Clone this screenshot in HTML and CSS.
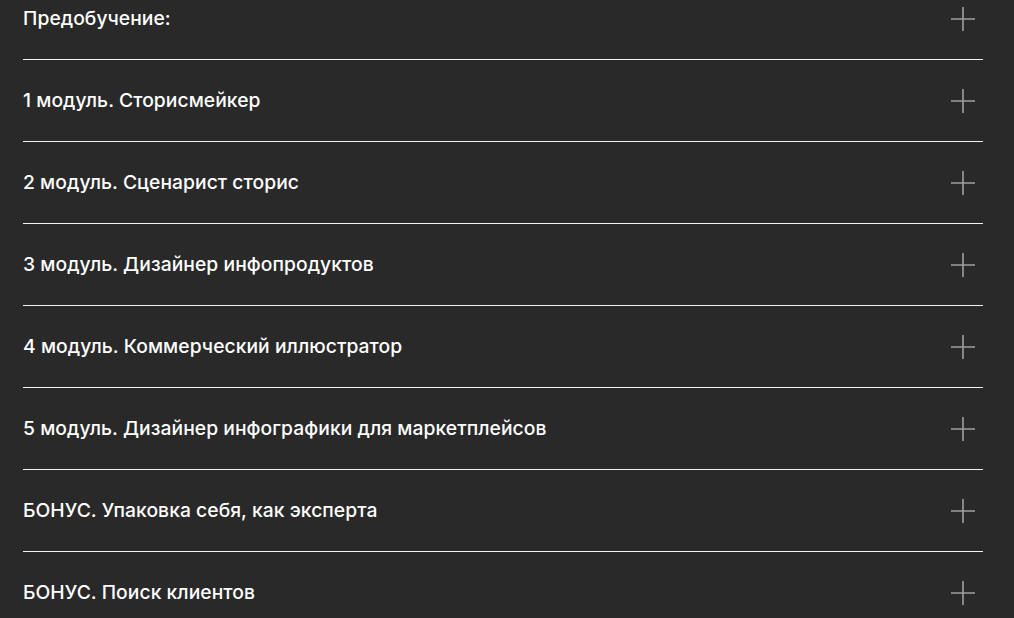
FILE: index.html
```html
<!DOCTYPE html>
<html lang="ru">
<head>
    <meta charset="UTF-8">
    <meta name="viewport" content="width=device-width, initial-scale=1.0">
    <title>Программа курса</title>
    <link rel="stylesheet" href="styles.css">
</head>
<body>
    <div class="program">
        <div class="item">
            <span class="title">Предобучение:</span>
            <svg class="plus" viewBox="0 0 24 24"><path d="M12 0V24M0 12H24"/></svg>
        </div>
        <div class="item">
            <span class="title">1 модуль. Сторисмейкер</span>
            <svg class="plus" viewBox="0 0 24 24"><path d="M12 0V24M0 12H24"/></svg>
        </div>
        <div class="item">
            <span class="title">2 модуль. Сценарист сторис</span>
            <svg class="plus" viewBox="0 0 24 24"><path d="M12 0V24M0 12H24"/></svg>
        </div>
        <div class="item">
            <span class="title">3 модуль. Дизайнер инфопродуктов</span>
            <svg class="plus" viewBox="0 0 24 24"><path d="M12 0V24M0 12H24"/></svg>
        </div>
        <div class="item">
            <span class="title">4 модуль. Коммерческий иллюстратор</span>
            <svg class="plus" viewBox="0 0 24 24"><path d="M12 0V24M0 12H24"/></svg>
        </div>
        <div class="item">
            <span class="title">5 модуль. Дизайнер инфографики для маркетплейсов</span>
            <svg class="plus" viewBox="0 0 24 24"><path d="M12 0V24M0 12H24"/></svg>
        </div>
        <div class="item">
            <span class="title">БОНУС. Упаковка себя, как эксперта</span>
            <svg class="plus" viewBox="0 0 24 24"><path d="M12 0V24M0 12H24"/></svg>
        </div>
        <div class="item">
            <span class="title">БОНУС. Поиск клиентов</span>
            <svg class="plus" viewBox="0 0 24 24"><path d="M12 0V24M0 12H24"/></svg>
        </div>
    </div>
</body>
</html>
```

FILE: styles.css
```css
html, body {
    margin: 0;
    padding: 0;
    background-color: #292929;
    color: #fff;
    font-family: Inter, 'Noto Sans', sans-serif;
    overflow: hidden;
}
.program {
    width: 960px;
    margin: -22px 0 0 23px;
}
.item {
    height: 81px;
    display: flex;
    align-items: center;
    justify-content: space-between;
    border-bottom: 1px solid #f2f2f2;
}
.title {
    font-size: 19.3px;
    font-weight: 500;
    letter-spacing: 0.05px;
    padding-bottom: 2px;
}
.plus {
    width: 24px;
    height: 24px;
    margin-right: 8px;
    fill: none;
    stroke: rgba(255, 255, 255, 0.55);
    stroke-width: 1.6;
}
```
